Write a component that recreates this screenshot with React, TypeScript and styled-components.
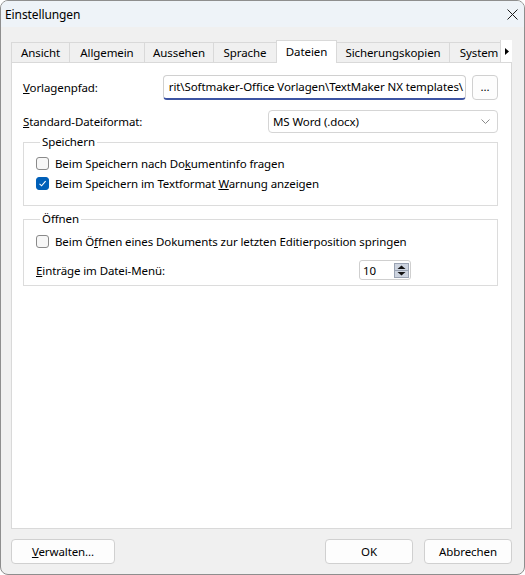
import React from "react";
import styled, { createGlobalStyle } from "styled-components";

const GlobalStyle = createGlobalStyle`
  html, body {
    margin: 0;
    padding: 0;
    background: #ffffff;
  }
  body {
    font-family: "Segoe UI", "Noto Sans", "Open Sans", sans-serif;
    font-size: 11.5px;
    letter-spacing: -0.1px;
    color: #000;
  }
  * {
    box-sizing: border-box;
  }
`;

const Window = styled.div`
  width: 525px;
  height: 575px;
  border: 1px solid #8e8e8e;
  border-radius: 8px;
  overflow: hidden;
  background: #f0f0f0;
  display: flex;
  flex-direction: column;
`;

const TitleBar = styled.div`
  height: 26px;
  flex: none;
  background: #eef3f8;
  display: flex;
  align-items: center;
  justify-content: space-between;
  padding: 0 6px 0 4px;
  font-size: 12px;
`;

const CloseButton = styled.div`
  width: 12px;
  height: 12px;
  display: flex;
  align-items: center;
  justify-content: center;
`;

const Body = styled.div`
  flex: 1;
  display: flex;
  flex-direction: column;
  padding: 13px 12px 0 10px;
  min-height: 0;
`;

const TabRow = styled.div`
  height: 22px;
  flex: none;
  display: flex;
  align-items: flex-end;
  position: relative;
  z-index: 1;
`;

const TabStrip = styled.div`
  flex: 1;
  min-width: 0;
  display: flex;
  align-items: flex-end;
  overflow: hidden;
  height: 23px;
  margin-bottom: -1px;
`;

const Tab = styled.div<{ $w: number; $active?: boolean }>`
  flex: none;
  width: ${({ $w }) => $w}px;
  height: ${({ $active }) => ($active ? 23 : 21)}px;
  padding-bottom: ${({ $active }) => ($active ? 2 : 1)}px;
  margin-left: -1px;
  border: 1px solid #d9d9d9;
  border-bottom: ${({ $active }) => ($active ? "none" : "1px solid #d9d9d9")};
  background: ${({ $active }) => ($active ? "#ffffff" : "#f0f0f0")};
  display: flex;
  align-items: center;
  justify-content: center;
  white-space: nowrap;
  &:first-child {
    margin-left: 0;
  }
`;

const ScrollArrow = styled.div`
  flex: none;
  width: 12px;
  height: 22px;
  background: #ffffff;
  border-left: 1px solid #d9d9d9;
  display: flex;
  align-items: center;
  justify-content: center;
`;

const Panel = styled.div`
  flex: 1;
  background: #ffffff;
  border: 1px solid #d9d9d9;
  padding: 12px 13px 0 11px;
  display: flex;
  flex-direction: column;
`;

const FieldRow = styled.div<{ $gap?: number }>`
  display: flex;
  align-items: center;
  margin-top: ${({ $gap }) => $gap ?? 0}px;
`;

const Label = styled.div<{ $w: number }>`
  flex: none;
  width: ${({ $w }) => $w}px;
  white-space: nowrap;
`;

const PathInput = styled.div`
  flex: 1;
  min-width: 0;
  height: 25px;
  border: 1px solid #d0d0d0;
  border-bottom: 2px solid #3d54a3;
  border-radius: 4px;
  overflow: hidden;
  display: flex;
  justify-content: flex-end;
  align-items: center;
  padding: 0 2px 1px 0;
  white-space: nowrap;
`;

const SmallButton = styled.div`
  flex: none;
  width: 26px;
  height: 25px;
  margin-left: 6px;
  border: 1px solid #d0d0d0;
  border-radius: 4px;
  background: #fdfdfd;
  display: flex;
  align-items: center;
  justify-content: center;
  padding-bottom: 3px;
`;

const Select = styled.div`
  flex: 1;
  height: 23px;
  border: 1px solid #d5d5d5;
  border-radius: 4px;
  background: #ffffff;
  display: flex;
  align-items: center;
  justify-content: space-between;
  padding: 0 7px 0 4px;
`;

const Group = styled.fieldset<{ $gap: number }>`
  margin: ${({ $gap }) => $gap}px 0 0 0;
  padding: 0 12px 0 12px;
  border: 1px solid #dcdcdc;
  min-width: 0;
`;

const Legend = styled.legend`
  margin-left: 4px;
  padding: 0 2px;
  line-height: 16px;
`;

const Rows = styled.div<{ $top: number; $bottom: number }>`
  display: flex;
  flex-direction: column;
  padding: ${({ $top }) => $top}px 0 ${({ $bottom }) => $bottom}px 0;
`;

const CheckRow = styled.div`
  height: 20px;
  display: flex;
  align-items: center;
  gap: 6px;
  white-space: nowrap;
`;

const Box = styled.div<{ $checked?: boolean }>`
  flex: none;
  width: 13px;
  height: 13px;
  border-radius: 3px;
  border: 1px solid ${({ $checked }) => ($checked ? "#005fb8" : "#8a8a8a")};
  background: ${({ $checked }) => ($checked ? "#005fb8" : "#f7f7f7")};
  display: flex;
  align-items: center;
  justify-content: center;
`;

const SpinRow = styled.div`
  height: 20px;
  margin-top: 9px;
  display: flex;
  align-items: center;
  justify-content: space-between;
  padding-right: 74px;
`;

const Spin = styled.div`
  width: 52px;
  height: 20px;
  border: 1px solid #cfcfcf;
  border-radius: 3px;
  display: flex;
  align-items: center;
  justify-content: space-between;
  padding: 0 1px 0 3px;
`;

const Footer = styled.div`
  flex: none;
  display: flex;
  align-items: center;
  padding: 10px 12px 10px 10px;
  gap: 11px;
`;

const Button = styled.div<{ $w: number; $push?: boolean }>`
  width: ${({ $w }) => $w}px;
  height: 25px;
  border: 1px solid #d0d0d0;
  border-radius: 4px;
  background: #fdfdfd;
  display: flex;
  align-items: center;
  justify-content: center;
  margin-left: ${({ $push }) => ($push ? "auto" : "0")};
`;

const tabs = [
  { label: "Ansicht", w: 59 },
  { label: "Allgemein", w: 76 },
  { label: "Aussehen", w: 70 },
  { label: "Sprache", w: 64 },
  { label: "Dateien", w: 61, active: true },
  { label: "Sicherungskopien", w: 114 },
  { label: "System", w: 60 },
];

const Check = ({ checked }: { checked?: boolean }) => (
  <Box $checked={checked}>
    {checked && (
      <svg width="9" height="9" viewBox="0 0 9 9">
        <path d="M1.5 4.8 L3.6 6.8 L7.6 2.2" fill="none" stroke="#fff" strokeWidth="1.1" />
      </svg>
    )}
  </Box>
);

export default function App() {
  return (
    <>
      <GlobalStyle />
      <Window>
        <TitleBar>
          <span>Einstellungen</span>
          <CloseButton>
            <svg width="11" height="11" viewBox="0 0 11 11">
              <path d="M0.5 0.5 L10.5 10.5 M10.5 0.5 L0.5 10.5" stroke="#1b1b1b" strokeWidth="1" />
            </svg>
          </CloseButton>
        </TitleBar>
        <Body>
          <TabRow>
            <TabStrip>
              {tabs.map((t) => (
                <Tab key={t.label} $w={t.w} $active={t.active}>
                  {t.label}
                </Tab>
              ))}
            </TabStrip>
            <ScrollArrow>
              <svg width="4" height="7" viewBox="0 0 4 7">
                <path d="M0 0 L4 3.5 L0 7 Z" fill="#000" />
              </svg>
            </ScrollArrow>
          </TabRow>
          <Panel>
            <FieldRow>
              <Label $w={140}>
                <u>V</u>orlagenpfad:
              </Label>
              <PathInput>rit\Softmaker-Office Vorlagen\TextMaker NX templates\</PathInput>
              <SmallButton>...</SmallButton>
            </FieldRow>
            <FieldRow $gap={10}>
              <Label $w={245}>
                <u>S</u>tandard-Dateiformat:
              </Label>
              <Select>
                <span>MS Word (.docx)</span>
                <svg width="9" height="5" viewBox="0 0 9 5">
                  <path d="M0.5 0.5 L4.5 4.5 L8.5 0.5" fill="none" stroke="#8a8a8a" strokeWidth="1" />
                </svg>
              </Select>
            </FieldRow>
            <Group $gap={1}>
              <Legend>Speichern</Legend>
              <Rows $top={3} $bottom={12}>
                <CheckRow>
                  <Check />
                  <span>
                    Beim Speichern nach Do<u>k</u>umentinfo fragen
                  </span>
                </CheckRow>
                <CheckRow>
                  <Check checked />
                  <span>
                    Beim Speichern im Textformat <u>W</u>arnung anzeigen
                  </span>
                </CheckRow>
              </Rows>
            </Group>
            <Group $gap={5}>
              <Legend>Öffnen</Legend>
              <Rows $top={4} $bottom={5}>
                <CheckRow>
                  <Check />
                  <span>
                    Beim Ö<u>f</u>fnen eines Dokuments zur letzten Editierposition springen
                  </span>
                </CheckRow>
                <SpinRow>
                  <span>
                    <u>E</u>inträge im Datei-Menü:
                  </span>
                  <Spin>
                    <span>10</span>
                    <svg width="15" height="15" viewBox="0 0 15 15">
                      <rect x="0.5" y="0.5" width="14" height="14" fill="#cdd4e0" stroke="#9aa3b3" />
                      <path d="M1 7.5 L14 7.5" stroke="#9aa3b3" />
                      <path d="M3.5 6 L7.5 2.5 L11.5 6 Z" fill="#111" />
                      <path d="M3.5 9 L7.5 12.5 L11.5 9 Z" fill="#111" />
                    </svg>
                  </Spin>
                </SpinRow>
              </Rows>
            </Group>
          </Panel>
        </Body>
        <Footer>
          <Button $w={104}>
            <span>
              <u>V</u>erwalten...
            </span>
          </Button>
          <Button $w={88} $push>
            OK
          </Button>
          <Button $w={88}>Abbrechen</Button>
        </Footer>
      </Window>
    </>
  );
}
